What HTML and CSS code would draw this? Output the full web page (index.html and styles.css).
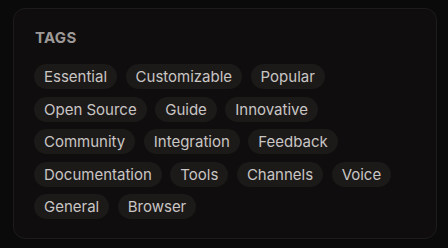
FILE: index.html
```html
<!DOCTYPE html>
<html lang="en">
<head>
    <meta charset="UTF-8">
    <meta name="viewport" content="width=device-width, initial-scale=1.0">
    <title>Tags</title>
    <link rel="stylesheet" href="styles.css">
</head>
<body>
    <div class="card">
        <div class="card-title">Tags</div>
        <div class="tag-list">
            <span class="tag">Essential</span>
            <span class="tag">Customizable</span>
            <span class="tag">Popular</span>
            <span class="tag">Open Source</span>
            <span class="tag">Guide</span>
            <span class="tag">Innovative</span>
            <span class="tag">Community</span>
            <span class="tag">Integration</span>
            <span class="tag">Feedback</span>
            <span class="tag">Documentation</span>
            <span class="tag">Tools</span>
            <span class="tag">Channels</span>
            <span class="tag">Voice</span>
            <span class="tag">General</span>
            <span class="tag">Browser</span>
        </div>
    </div>
</body>
</html>
```

FILE: styles.css
```css
/* Page */
body {
    background-color: #0a0a0a;
    color: #d0cdcb;
    font-family: Inter, "Noto Sans", sans-serif;
    margin: 0;
    padding: 8px 11px 9px 13px;
}

/* Card holding the tags */
.card {
    background-color: #0f0d0d;
    border: 1px solid #1d1b1b;
    border-radius: 12px;
    height: 231px;
    box-sizing: border-box;
    padding: 20px 20px;
}

.card-title {
    font-size: 15px;
    font-weight: 700;
    line-height: 18px;
    letter-spacing: 0.02em;
    text-transform: uppercase;
    color: #9d9998;
    margin-bottom: 17px;
    padding-left: 1px;
}

/* Pills */
.tag-list {
    display: flex;
    flex-wrap: wrap;
    gap: 7.5px 8.5px;
}

.tag {
    background-color: #1c1919;
    color: #c9c6c4;
    font-size: 15px;
    line-height: 25px;
    padding: 0 10px;
    border-radius: 999px;
}
```
